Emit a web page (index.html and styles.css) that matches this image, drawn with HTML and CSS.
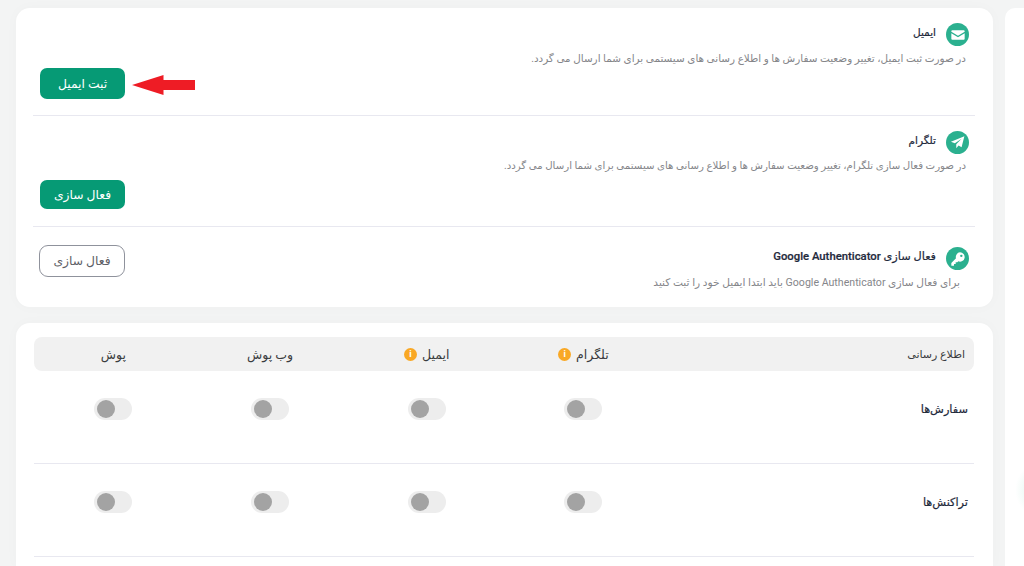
FILE: index.html
```html
<!DOCTYPE html>
<html lang="fa" dir="rtl">
<head>
    <meta charset="UTF-8">
    <meta name="viewport" content="width=device-width, initial-scale=1.0">
    <title>تنظیمات اطلاع رسانی</title>
    <link rel="stylesheet" href="styles.css">
</head>
<body>
    <aside class="side-panel"><span class="chat-glow"></span></aside>

    <main class="content">
        <section class="card card-verify">
            <div class="verify-item verify-email">
                <div class="verify-head">
                    <span class="verify-icon">
                        <svg viewBox="0 0 24 24" width="16" height="16"><path fill="#fff" d="M3.5 5h17A1.5 1.5 0 0 1 22 6.5v.6l-10 6.2L2 7.100v-.6A1.500 1.500 0 0 1 3.500 5zM2 9.200v8.300A1.500 1.500 0 0 0 3.500 19h17a1.500 1.500 0 0 0 1.500-1.500V9.200l-10 6.200z"/></svg>
                    </span>
                    <h3>ایمیل</h3>
                </div>
                <p class="verify-desc">در صورت ثبت ایمیل، تغییر وضعیت سفارش ها و اطلاع رسانی های سیستمی برای شما ارسال می گردد.</p>
                <button class="btn btn-green">ثبت ایمیل</button>
            </div>

            <div class="verify-item verify-telegram">
                <div class="verify-head">
                    <span class="verify-icon">
                        <svg viewBox="0 0 24 24" width="15" height="15"><path fill="#fff" d="M23 2 1.500 10.800l6.300 2.500L18.500 6 10 14.800V21l3.700-4.300 4.800 3z"/></svg>
                    </span>
                    <h3>تلگرام</h3>
                </div>
                <p class="verify-desc">در صورت فعال سازی تلگرام، تغییر وضعیت سفارش ها و اطلاع رسانی های سیستمی برای شما ارسال می گردد.</p>
                <button class="btn btn-green">فعال سازی</button>
            </div>

            <div class="verify-item verify-google">
                <div class="verify-text">
                    <div class="verify-head">
                        <span class="verify-icon">
                            <svg viewBox="0 0 24 24" width="16" height="16"><path fill="#fff" fill-rule="evenodd" d="M15 2a7 7 0 1 1-2.600 13.500L11 17H8.500v2.500H6V22H2v-4l7-7A7 7 0 0 1 15 2zm2 3.500a1.800 1.800 0 1 0 0 3.600 1.800 1.800 0 0 0 0-3.600z"/></svg>
                        </span>
                        <h3>فعال سازی Google Authenticator</h3>
                    </div>
                    <p class="verify-desc">برای فعال سازی Google Authenticator باید ابتدا ایمیل خود را ثبت کنید</p>
                </div>
                <button class="btn btn-outline">فعال سازی</button>
            </div>

            <svg class="red-arrow" viewBox="0 0 64 20" width="63" height="20" preserveAspectRatio="none"><polygon fill="#ee1c25" points="0,10 32,0 32,5 64,5 64,15 32,15 32,20"/></svg>
        </section>

        <section class="card card-notify">
            <div class="notify-row notify-header">
                <div class="notify-title">اطلاع رسانی</div>
                <div class="notify-col">تلگرام <span class="info-dot">i</span></div>
                <div class="notify-col">ایمیل <span class="info-dot">i</span></div>
                <div class="notify-col">وب پوش</div>
                <div class="notify-col">پوش</div>
            </div>

            <div class="notify-row notify-item">
                <div class="notify-title">سفارش‌ها</div>
                <div class="notify-col"><span class="toggle"></span></div>
                <div class="notify-col"><span class="toggle"></span></div>
                <div class="notify-col"><span class="toggle"></span></div>
                <div class="notify-col"><span class="toggle"></span></div>
            </div>

            <div class="notify-row notify-item">
                <div class="notify-title">تراکنش‌ها</div>
                <div class="notify-col"><span class="toggle"></span></div>
                <div class="notify-col"><span class="toggle"></span></div>
                <div class="notify-col"><span class="toggle"></span></div>
                <div class="notify-col"><span class="toggle"></span></div>
            </div>
        </section>
    </main>
</body>
</html>
```

FILE: styles.css
```css
* {
    margin: 0;
    padding: 0;
    box-sizing: border-box;
}

html, body {
    height: 566px;
    overflow: hidden;
}

body {
    display: flex;
    gap: 12px;
    padding: 8px 0 0 16px;
    background: #f3f4f4;
    color: #1f2a3c;
    font-family: Roboto, "DejaVu Sans", sans-serif;
}

.side-panel {
    position: relative;
    width: 19px;
    flex-shrink: 0;
    background: #fff;
    border-radius: 10px 0 0 0;
    overflow: hidden;
}

.chat-glow {
    position: absolute;
    top: 452px;
    left: 10px;
    width: 60px;
    height: 60px;
    border-radius: 50%;
    background: radial-gradient(circle, #cfeee4 0%, rgba(207, 238, 228, 0) 70%);
}

.content {
    width: 977px;
    display: flex;
    flex-direction: column;
    gap: 16px;
}

.card {
    position: relative;
    flex-shrink: 0;
    background: #fff;
    border-radius: 14px;
    padding: 0 18px 0 17px;
    box-shadow: 0 0 14px rgba(0, 0, 0, 0.025);
}

.card-verify {
    height: 299px;
}

.verify-item {
    display: flex;
    flex-direction: column;
    border-bottom: 1px solid #e8e8f0;
}

.verify-email {
    height: 108px;
    padding-top: 15px;
}

.verify-telegram {
    height: 111px;
    padding-top: 15px;
}

.verify-google {
    flex-direction: row;
    justify-content: space-between;
    padding: 20px 6px 0 6px;
    border-bottom: none;
}

.verify-head {
    display: flex;
    align-items: center;
    gap: 10px;
    padding-right: 6px;
}

.verify-google .verify-head {
    padding-right: 0;
}

.verify-head h3 {
    font-size: 10.500px;
    font-weight: 500;
    line-height: 16px;
    margin-top: -4px;
    -webkit-text-stroke: 0.2px #1f2a3c;
}

.verify-google .verify-head h3 {
    font-size: 11.300px;
}

.verify-icon {
    width: 23px;
    height: 23px;
    border-radius: 50%;
    background: #2bb08f;
    display: flex;
    align-items: center;
    justify-content: center;
    flex-shrink: 0;
}

.verify-desc {
    font-size: 10.400px;
    line-height: 14px;
    color: #85868a;
    padding-right: 9px;
    margin-top: 6px;
}

.verify-telegram .verify-desc {
    font-size: 10.200px;
    margin-top: 5px;
}

.verify-google .verify-desc {
    font-size: 10.600px;
    padding-right: 9px;
    margin-top: 6px;
}

.btn {
    width: 85px;
    height: 31px;
    border-radius: 7px;
    border: none;
    font-family: inherit;
    font-size: 12.300px;
    cursor: pointer;
}

.btn-green {
    align-self: flex-end;
    margin-left: 7px;
    margin-top: 2px;
    background: #069a75;
    color: #fff;
}

.verify-telegram .btn-green {
    height: 29px;
    margin-top: 7px;
}

.btn-outline {
    width: 86px;
    height: 32px;
    margin-top: -2px;
    background: #fff;
    border: 1px solid #8f929c;
    border-radius: 9px;
    color: #5e6066;
}

.red-arrow {
    position: absolute;
    top: 67px;
    left: 116px;
}

.card-notify {
    height: 243px;
    border-radius: 14px 14px 0 0;
    padding: 14px 19px 0 18px;
}

.notify-row {
    display: grid;
    grid-template-columns: 1fr repeat(4, 156.700px);
    align-items: center;
}

.notify-header {
    height: 34px;
    padding: 0 9px 0 1px;
    background: #f1f1f1;
    border-radius: 8px;
    font-size: 12.500px;
    color: #3a3c40;
}

.notify-header .notify-title {
    font-size: 11px;
}

.notify-item {
    height: 93px;
    padding: 0 6px 16px 1px;
    border-bottom: 1px solid #e8e8f0;
}

.notify-col {
    display: flex;
    align-items: center;
    justify-content: center;
    gap: 5px;
}

.notify-item .notify-title {
    font-size: 11.300px;
    font-weight: 500;
    -webkit-text-stroke: 0.2px #1f2a3c;
}

.info-dot {
    width: 13px;
    height: 13px;
    border-radius: 50%;
    background: #f9a825;
    color: #fff;
    font-size: 9px;
    font-weight: 700;
    line-height: 13px;
    text-align: center;
}

.toggle {
    position: relative;
    width: 38px;
    height: 22px;
    border-radius: 11px;
    background: #ededed;
}

.toggle::after {
    content: "";
    position: absolute;
    top: 2px;
    left: 3px;
    width: 18px;
    height: 18px;
    border-radius: 50%;
    background: #a3a3a3;
}
```
